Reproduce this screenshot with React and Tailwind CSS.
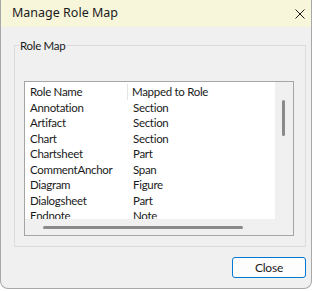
import React from "react";

const rows = [
  ["Annotation", "Section"],
  ["Artifact", "Section"],
  ["Chart", "Section"],
  ["Chartsheet", "Part"],
  ["CommentAnchor", "Span"],
  ["Diagram", "Figure"],
  ["Dialogsheet", "Part"],
  ["Endnote", "Note"],
];

const listFont = { fontFamily: 'Lato, "Noto Sans", sans-serif' };

export default function App() {
  return (
    <div className="w-[314px] h-[291px] bg-white" style={{ fontFamily: '"Noto Sans", "Segoe UI", sans-serif' }}>
      <div className="w-[312px] h-[289px] flex flex-col bg-[#f0f0f0] border-x border-b border-[#a8a8a8] rounded-b-[8px] overflow-hidden">
        <div className="h-[27px] flex items-center justify-between bg-[#f8f6da] pl-[11px] pr-[5px]">
          <span className="text-[12.5px] text-[#1a1a1a] leading-none">Manage Role Map</span>
          <svg width="12" height="12" viewBox="0 0 12 12">
            <path d="M1.5 1.5 L10.5 10.5 M10.5 1.5 L1.5 10.5" stroke="#1a1a1a" strokeWidth="1" />
          </svg>
        </div>
        <div className="pt-[18px] pl-[13px]">
          <div className="relative w-[292px] h-[202px] border border-[#dcdcdc] pt-[35px] pl-[9px]">
            <span className="absolute left-[4px] top-[-8px] px-[1px] bg-[#f0f0f0] text-[11.5px] tracking-[-0.3px] leading-[16px] text-[#1a1a1a]" style={listFont}>Role Map</span>
            <div className="w-[270px] h-[155px] border border-[#a5a5a5] bg-white flex flex-col">
              <div className="flex h-[137px]">
                <div className="w-[250px] h-[137px] overflow-hidden pt-[2px] text-[11.5px] tracking-[-0.3px] text-[#1a1a1a]" style={listFont}>
                  <div className="flex h-[15.5px] items-center">
                    <div className="w-[103px] pl-[5px] border-r border-[#e5e5e5] h-full flex items-center">Role Name</div>
                    <div className="pl-[4px]">Mapped to Role</div>
                  </div>
                  {rows.map(([a, b]) => (
                    <div key={a} className="flex h-[15.5px] items-center">
                      <div className="w-[108px] pl-[5px]">{a}</div>
                      <div>{b}</div>
                    </div>
                  ))}
                </div>
                <div className="w-[18px] h-[137px] bg-[#f0f0f0] pt-[18px] pl-[7px]">
                  <div className="w-[3px] h-[36px] rounded-full bg-[#8a8a8a]" />
                </div>
              </div>
              <div className="h-[16px] bg-[#f0f0f0] pt-[7px] pl-[18px]">
                <div className="w-[200px] h-[3px] rounded-full bg-[#8a8a8a]" />
              </div>
            </div>
          </div>
        </div>
        <div className="flex justify-end pr-[5px] mt-[10px]">
          <button className="w-[74px] h-[21px] rounded-[3px] border border-[#0078d4] bg-[#fdfdfd] text-[12px] tracking-[-0.2px] text-[#1a1a1a] flex items-center justify-center" style={listFont}>Close</button>
        </div>
      </div>
    </div>
  );
}
